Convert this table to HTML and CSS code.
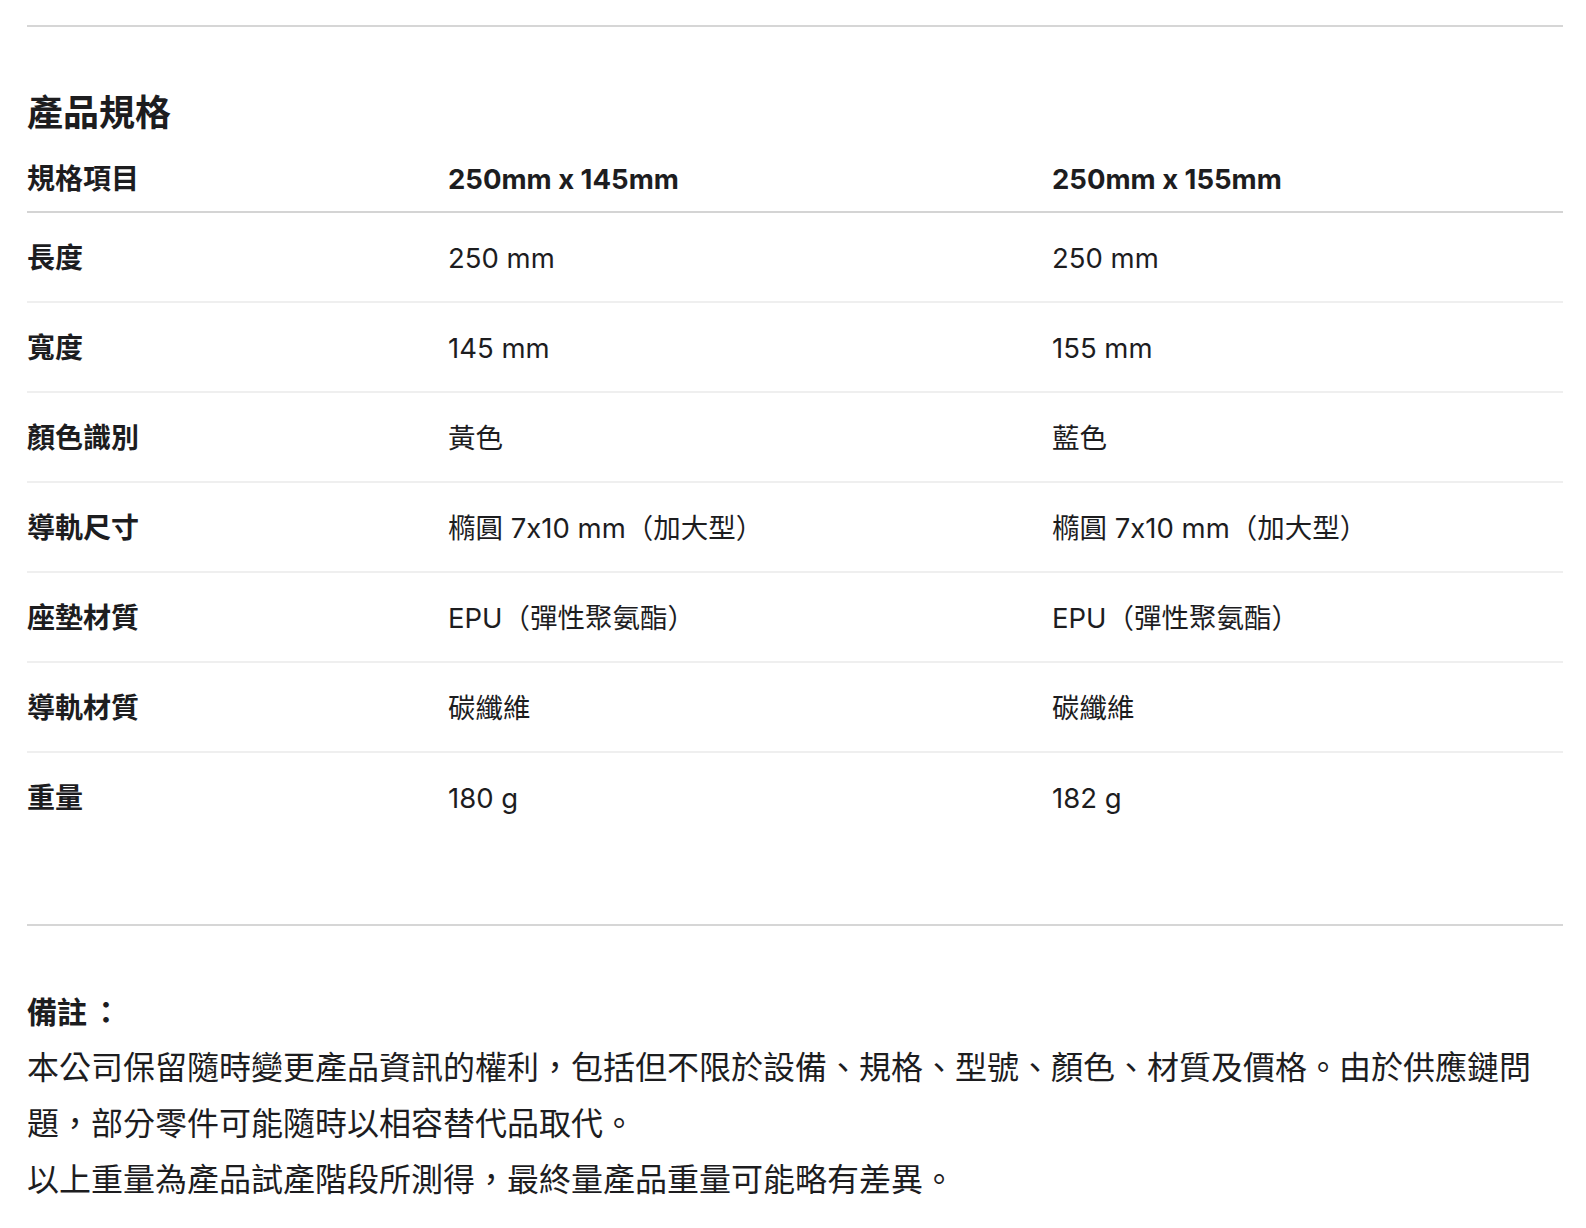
FILE: index.html
```html
<!DOCTYPE html>
<html lang="zh-Hant">
<head>
<meta charset="utf-8">
<title>產品規格</title>
<link rel="stylesheet" href="styles.css">
</head>
<body>
<main class="page">
  <hr class="rule">
  <h2 class="title">產品規格</h2>
  <div class="spec">
    <div class="row head">
      <div class="cell label">規格項目</div>
      <div class="cell">250mm x 145mm</div>
      <div class="cell">250mm x 155mm</div>
    </div>
    <div class="row">
      <div class="cell label">長度</div>
      <div class="cell">250 mm</div>
      <div class="cell">250 mm</div>
    </div>
    <div class="row">
      <div class="cell label">寬度</div>
      <div class="cell">145 mm</div>
      <div class="cell">155 mm</div>
    </div>
    <div class="row">
      <div class="cell label">顏色識別</div>
      <div class="cell">黃色</div>
      <div class="cell">藍色</div>
    </div>
    <div class="row">
      <div class="cell label">導軌尺寸</div>
      <div class="cell">橢圓 7x10 mm（加大型）</div>
      <div class="cell">橢圓 7x10 mm（加大型）</div>
    </div>
    <div class="row">
      <div class="cell label">座墊材質</div>
      <div class="cell">EPU（彈性聚氨酯）</div>
      <div class="cell">EPU（彈性聚氨酯）</div>
    </div>
    <div class="row">
      <div class="cell label">導軌材質</div>
      <div class="cell">碳纖維</div>
      <div class="cell">碳纖維</div>
    </div>
    <div class="row last">
      <div class="cell label">重量</div>
      <div class="cell">180 g</div>
      <div class="cell">182 g</div>
    </div>
  </div>
  <hr class="rule rule-notes">
  <section class="notes">
    <h3 class="notes-title">備註<span class="colon">：</span></h3>
    <p class="notes-text">本公司保留隨時變更產品資訊的權利，包括但不限於設備、規格、型號、顏色、材質及價格。由於供應鏈問題，部分零件可能隨時以相容替代品取代。</p>
    <p class="notes-text">以上重量為產品試產階段所測得，最終量產品重量可能略有差異。</p>
  </section>
</main>
</body>
</html>
```

FILE: styles.css
```css
html, body {
  margin: 0;
  padding: 0;
  background: #ffffff;
}

body {
  font-family: Inter, "Noto Sans CJK TC", sans-serif;
  color: #1d1d1f;
}

.page {
  padding: 25px 23px 0 27px;
}

.rule {
  margin: 0;
  border: 0;
  height: 2px;
  background: #d6d6d6;
}

.title {
  margin: 61px 0 0;
  font-size: 36px;
  line-height: 50px;
  font-weight: 700;
}

.spec {
  margin-top: 21px;
}

.row {
  display: grid;
  grid-template-columns: 421px 604px 1fr;
  align-items: center;
  height: 88px;
  border-bottom: 2px solid #efefef;
  font-size: 27.5px;
}

.row.head {
  height: 52px;
  align-items: start;
  border-bottom-color: #d4d4d4;
  font-weight: 700;
}

.row.head .cell {
  line-height: 40px;
  padding-top: 0;
}

.row.last {
  border-bottom: 0;
}

.cell {
  line-height: 40px;
  padding-top: 1px;
  white-space: nowrap;
}

.label {
  font-weight: 700;
  font-size: 28px;
}

.rule-notes {
  margin-top: 83px;
}

.notes {
  padding-top: 58px;
}

.notes-title {
  margin: 0;
  font-size: 30px;
  line-height: 56px;
  font-weight: 700;
}

.colon {
  margin-left: 4px;
}

.notes-text {
  margin: 0;
  font-size: 32px;
  line-height: 56px;
  font-weight: 400;
}
```
